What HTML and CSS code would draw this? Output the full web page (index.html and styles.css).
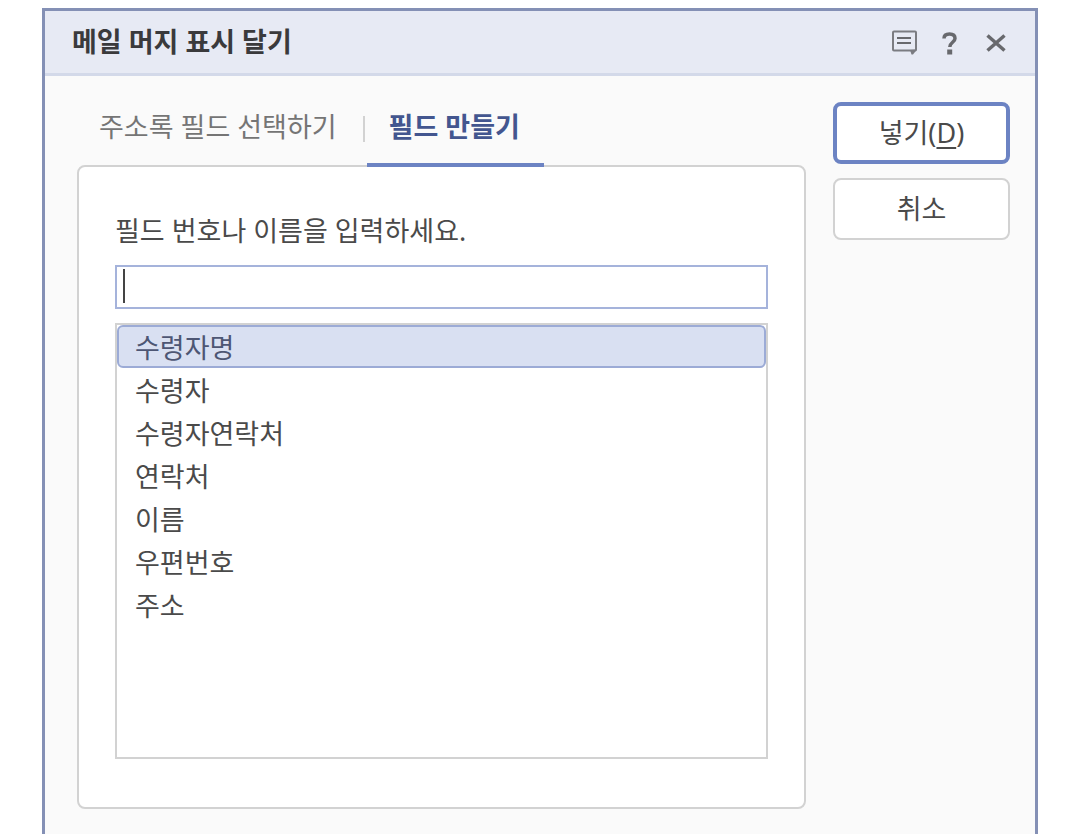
FILE: index.html
```
<!DOCTYPE html>
<html lang="ko">
<head>
    <meta charset="UTF-8">
    <meta name="viewport" content="width=device-width, initial-scale=1.0">
    <title>메일 머지 표시 달기</title>
    <link rel="stylesheet" href="styles.css">
</head>
<body>

    <form class="dialog">
        <!-- 제목 표시줄 -->
        <header class="title-bar">
            <h1>메일 머지 표시 달기</h1>
            <button type="button" class="icon-button" aria-label="의견">
                <svg width="28" height="28" viewBox="0 0 28 28" fill="none" stroke="#7b7c81" stroke-width="2">
                    <rect x="4" y="3.500" width="23" height="19" rx="1"/>
                    <path d="M21 22l1.500 4.500h1.500l4-5z" fill="#7b7c81" stroke="none"/>
                    <path d="M8 10h14M8 15h14" stroke="#68696d" stroke-width="2.200"/>
                </svg>
            </button>
            <button type="button" class="icon-button" aria-label="도움말">
                <svg width="28" height="28" viewBox="0 0 28 28" fill="none" stroke="#68696d" stroke-width="3.500">
                    <path d="M9 10.500C9 7.500 11 6 14.500 6s5.500 1.500 5.500 4.500c0 3.800-5.200 3.800-5.200 8.500"/>
                    <path d="M14.700 21.500v5" stroke-width="5"/>
                </svg>
            </button>
            <button type="button" class="icon-button" aria-label="닫기">
                <svg width="28" height="28" viewBox="0 0 28 28" fill="none" stroke="#68696d" stroke-width="3.500">
                    <path d="M6.500 7.500l17 15M23.500 7.500l-17 15"/>
                </svg>
            </button>
        </header>

        <div class="content">
            <div class="main">
                <div class="tabs" role="tablist">
                    <button type="button" class="tab" role="tab" aria-selected="false">주소록 필드 선택하기</button>
                    <span class="separator"></span>
                    <button type="button" class="tab active" role="tab" aria-selected="true">필드 만들기</button>
                </div>

                <div class="panel" role="tabpanel">
                    <label for="field-name">필드 번호나 이름을 입력하세요.</label>
                    <div class="field-input">
                        <input type="text" id="field-name" autocomplete="off">
                    </div>
                    <select class="field-list" size="10" aria-label="필드 목록">
                        <option selected>수령자명</option>
                        <option>수령자</option>
                        <option>수령자연락처</option>
                        <option>연락처</option>
                        <option>이름</option>
                        <option>우편번호</option>
                        <option>주소</option>
                    </select>
                </div>
            </div>

            <!-- 오른쪽 버튼 -->
            <div class="actions">
                <button type="submit" class="primary" accesskey="d">넣기(<u>D</u>)</button>
                <button type="button">취소</button>
            </div>
        </div>
    </form>

</body>
</html>
```
FILE: styles.css
```
* {
    box-sizing: border-box;
}

body {
    margin: 0;
    padding: 8px 42px 0;
    background-color: #fff;
    color: #4a4a4a;
    font-family: "Noto Sans", "Noto Sans CJK KR", sans-serif;
    font-size: 27px;
    line-height: 40px;
}

button, input, select {
    font: inherit;
    color: inherit;
}

button {
    cursor: pointer;
}

.dialog {
    min-height: calc(100vh - 8px);
    background-color: #fafafa;
    border: 3px solid #8490b5;
    border-bottom: none;
}

/* 제목 표시줄 */
.title-bar {
    display: flex;
    align-items: center;
    gap: 18px;
    height: 65px;
    padding: 0 26px 0 27px;
    background-color: #e7eaf4;
    border-bottom: 3px solid #d3d9e9;
}

.title-bar h1 {
    flex: 1;
    margin: 0;
    font-size: 27px;
    font-weight: bold;
    color: #3a3a3c;
}

.icon-button {
    display: flex;
    padding: 0;
    border: none;
    background: none;
}

.content {
    display: flex;
    gap: 27px;
    padding: 0 25px 26px 32px;
}

.main {
    flex: 1;
}

/* 탭 */
.tabs {
    display: flex;
    align-items: center;
    gap: 2px;
    height: 91px;
    margin-bottom: -2px;
    position: relative;
}

.tab {
    height: 91px;
    padding: 14px 24px 0 22px;
    border: none;
    border-bottom: 4px solid transparent;
    background: none;
    color: #757575;
}

.tab.active {
    border-bottom-color: #6c83c3;
    color: #43568f;
    font-weight: bold;
}

.separator {
    width: 2px;
    height: 26px;
    margin-top: 14px;
    background-color: #d2d2d2;
}

/* 필드 만들기 */
.panel {
    padding: 44px 36px 48px;
    background-color: #fff;
    border: 2px solid #d2d2d2;
    border-radius: 8px;
}

.panel label {
    display: block;
    margin-bottom: 14px;
}

.field-input {
    position: relative;
    margin-bottom: 14px;
}

.field-input input {
    display: block;
    width: 100%;
    height: 44px;
    padding: 0 6px;
    border: 2px solid #a5b3db;
    border-radius: 0;
    outline: none;
    background-color: #fff;
}

.field-input::after {
    content: "";
    position: absolute;
    top: 4px;
    left: 8px;
    width: 2px;
    height: 34px;
    background-color: #444;
}

.field-list {
    appearance: none;
    display: block;
    width: 100%;
    height: 436px;
    padding: 0;
    border: 2px solid #d2d2d2;
    border-radius: 0;
    outline: none;
    background-color: #fff;
    overflow: hidden;
}

.field-list option {
    height: 43px;
    padding: 0 16px;
    border: 2px solid transparent;
    border-radius: 6px;
    line-height: 38px;
}

.field-list option:checked {
    border-color: #9cabd6;
    background: #d9e0f2 linear-gradient(#d9e0f2, #d9e0f2);
    color: #4d5674;
}

/* 오른쪽 버튼 */
.actions {
    display: flex;
    flex-direction: column;
    gap: 14px;
    width: 177px;
    padding-top: 26px;
}

.actions button {
    height: 62px;
    padding: 0;
    border: 2px solid #d2d2d2;
    border-radius: 8px;
    background-color: #fff;
}

.actions .primary {
    border: 4px solid #6c83c3;
}

.actions u {
    text-underline-offset: 4px;
    text-decoration-thickness: 2px;
}
```
